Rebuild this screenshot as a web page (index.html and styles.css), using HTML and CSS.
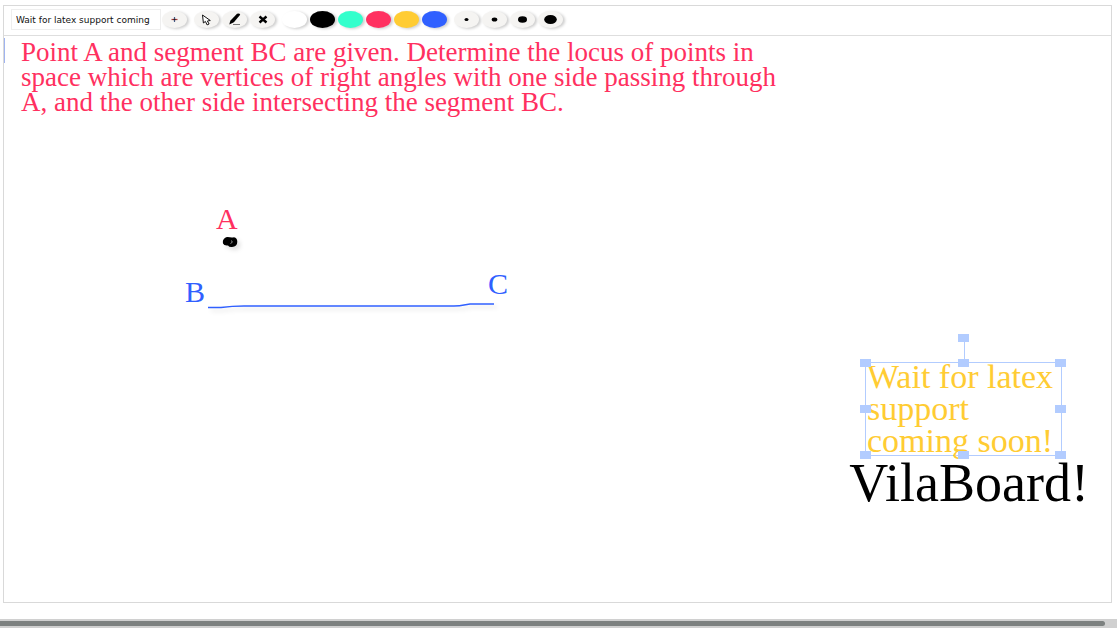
FILE: index.html
```html
<!DOCTYPE html>
<html lang="en">
<head>
<meta charset="utf-8">
<meta name="viewport" content="width=device-width, initial-scale=1">
<title>VilaBoard</title>
<link rel="stylesheet" href="styles.css">
</head>
<body>
<main class="board">
  <header class="toolbar">
    <input class="text-entry" type="text" aria-label="Text to add" value="Wait for latex support coming">
    <div class="group">
      <button class="pill" type="button" aria-label="Add text"><svg width="7" height="7" viewBox="0 0 7 7"><path d="M.5 3.500h6" stroke="#a83c3c" stroke-width="1.200"/><path d="M3.500 1v5" stroke="#455a86" stroke-width="1.200"/><path d="M2.500 3.500h2" stroke="#222" stroke-width="1.300"/></svg></button>
    </div>
    <div class="group">
      <button class="pill" type="button" aria-label="Select"><svg width="11" height="12" viewBox="0 0 11 12"><path d="M1.500 1l.9 8 2-1.600 1.700 3.500 2-.9-1.700-3 2.900-.5z" fill="#fff" stroke="#111" stroke-width="1" stroke-linejoin="round"/></svg></button>
      <button class="pill" type="button" aria-label="Draw"><svg width="13" height="13" viewBox="0 0 13 13"><path d="M9 .7q2.700-.7 3.200 1L5.900 9.200 1.300 11.500 2.300 7.700z" fill="#000"/><path d="M5 11.500h7" stroke="#777" stroke-width="1"/></svg></button>
      <button class="pill" type="button" aria-label="Delete"><svg width="10" height="9" viewBox="0 0 10 9"><path d="M1.500 1.500l7 6M8.500 1.500l-7 6" stroke="#000" stroke-width="2.400"/></svg></button>
    </div>
    <div class="group">
      <button class="pill white" type="button" aria-label="White"></button>
      <button class="pill black" type="button" aria-label="Black"></button>
      <button class="pill mint" type="button" aria-label="Mint"></button>
      <button class="pill red" type="button" aria-label="Red"></button>
      <button class="pill yellow" type="button" aria-label="Yellow"></button>
      <button class="pill blue" type="button" aria-label="Blue"></button>
    </div>
    <div class="group">
      <button class="pill" type="button" aria-label="Extra thin"><svg width="15" height="11" viewBox="0 0 15 11"><ellipse cx="7.500" cy="5.500" rx="2" ry="1.500"/></svg></button>
      <button class="pill" type="button" aria-label="Thin"><svg width="15" height="11" viewBox="0 0 15 11"><ellipse cx="7.500" cy="5.500" rx="2.800" ry="2"/></svg></button>
      <button class="pill" type="button" aria-label="Medium"><svg width="15" height="11" viewBox="0 0 15 11"><ellipse cx="7.500" cy="5.500" rx="4.500" ry="3.200"/></svg></button>
      <button class="pill" type="button" aria-label="Thick"><svg width="15" height="11" viewBox="0 0 15 11"><ellipse cx="7.500" cy="5.500" rx="6.300" ry="4.600"/></svg></button>
    </div>
  </header>
  <section class="canvas">
    <span class="caret"></span>
    <p class="label problem">Point A and segment BC are given. Determine the locus of points in<br>space which are vertices of right angles with one side passing through<br>A, and the other side intersecting the segment BC.</p>
    <span class="label point point-a">A</span>
    <span class="label point point-b">B</span>
    <span class="label point point-c">C</span>
    <svg class="strokes" width="320" height="90" viewBox="200 230 320 90">
      <path class="dot" d="M223 240.500q1.500-3.500 4.500-3.500 4 .8 6.500.3 3.300.8 3.300 4.500 0 5-5.300 5.200-3 .2-4-1.500-4 .5-5-2-.3-1.700 0-3z"/>
      <path d="M231.500 240.500q2 2-1 3" fill="none" stroke="#ccc" stroke-width=".7"/>
      <path class="line" d="M208 307.500h13q11-1.500 23-1.500h210q6 0 10-1l6-1h24"/>
    </svg>
    <div class="selection">
      <p class="selected-text">Wait for latex<br>support<br>coming soon!</p>
      <i class="stem"></i>
      <i class="handle rotate"></i>
      <i class="handle nw"></i><i class="handle n"></i><i class="handle ne"></i>
      <i class="handle w"></i><i class="handle e"></i>
      <i class="handle sw"></i><i class="handle s"></i><i class="handle se"></i>
    </div>
    <span class="label brand">VilaBoard!</span>
  </section>
</main>
<div class="scrollbar"><div class="thumb"></div></div>
</body>
</html>
```
FILE: styles.css
```css
* { box-sizing: border-box; }

body {
  margin: 0;
  height: 100vh;
  display: flex;
  flex-direction: column;
  background: #fff;
  font-family: "Liberation Serif", serif;
  overflow: hidden;
}

.board {
  flex: 1;
  display: flex;
  flex-direction: column;
  margin: 5px 5px 16px 3px;
  border: 1px solid #d9d9d9;
}

.toolbar {
  display: flex;
  align-items: center;
  gap: 7px;
  padding: 3px 7px 5px;
  border-bottom: 1px solid #dedede;
}

.text-entry {
  width: 150px;
  height: 21px;
  padding: 0 4px;
  border: 1px solid #eee;
  background: #fff;
  color: #111;
  font: 9px "DejaVu Sans", sans-serif;
  outline: none;
}

.text-entry + .group { margin-left: -6px; }

.group { display: flex; gap: 3px; }

.pill {
  display: flex;
  align-items: center;
  justify-content: center;
  width: 25px;
  height: 17px;
  padding: 0;
  border: 0;
  border-radius: 50%;
  background: #f5f4f2;
  box-shadow: 2px 1px 3px rgba(0, 0, 0, .2);
}

.white { background: #fff; }
.black { background: #000; }
.mint { background: #33ffcc; }
.red { background: #ff3060; }
.yellow { background: #ffcc33; }
.blue { background: #3060ff; }

.canvas {
  position: relative;
  flex: 1;
}

.caret {
  position: absolute;
  left: 0;
  top: 2px;
  width: 1px;
  height: 25px;
  background: #a0b4f0;
}

.label {
  position: absolute;
  margin: 0;
  white-space: nowrap;
}

.problem {
  left: 17px;
  top: 4px;
  color: #ff3060;
  font-size: 27px;
  line-height: 25px;
}

.point { font-size: 30px; line-height: 30px; color: #3060ff; }
.point-a { left: 212px; top: 168px; color: #ff3060; }
.point-b { left: 181px; top: 241px; }
.point-c { left: 484px; top: 233px; }

.strokes {
  position: absolute;
  left: 196px;
  top: 194px;
  filter: drop-shadow(3px 3px 2px rgba(0, 0, 0, .12));
}

.dot { fill: #000; }
.line { fill: none; stroke: #3060ff; stroke-width: 1.5; }

.selection {
  position: absolute;
  right: 49px;
  top: 326px;
  width: 197px;
  height: 94px;
  border: 1px solid #b2ccff;
}

.selected-text {
  margin: -2px 0 0;
  padding-left: 1px;
  color: #ffcc33;
  font-size: 34px;
  line-height: 32px;
  white-space: nowrap;
}

.stem {
  position: absolute;
  left: 50%;
  top: -25px;
  width: 1px;
  height: 25px;
  background: #b2ccff;
}

.handle {
  position: absolute;
  width: 11px;
  height: 8px;
  margin: -4px -6px;
  background: #b2ccff;
}

.nw, .w, .sw { left: 0; }
.n, .s, .rotate { left: 50%; }
.ne, .e, .se { left: 100%; }
.nw, .n, .ne { top: 0; }
.w, .e { top: 50%; }
.sw, .s, .se { top: 100%; }
.rotate { top: -25px; }

.brand {
  right: 22px;
  top: 423px;
  color: #000;
  font-size: 54px;
  line-height: 48px;
}

.scrollbar {
  height: 9px;
  padding: 2px 12px 2px 0;
  background: #d0d0d0;
}

.thumb {
  height: 5px;
  border-radius: 0 3px 3px 0;
  background: #7d8180;
}
```
